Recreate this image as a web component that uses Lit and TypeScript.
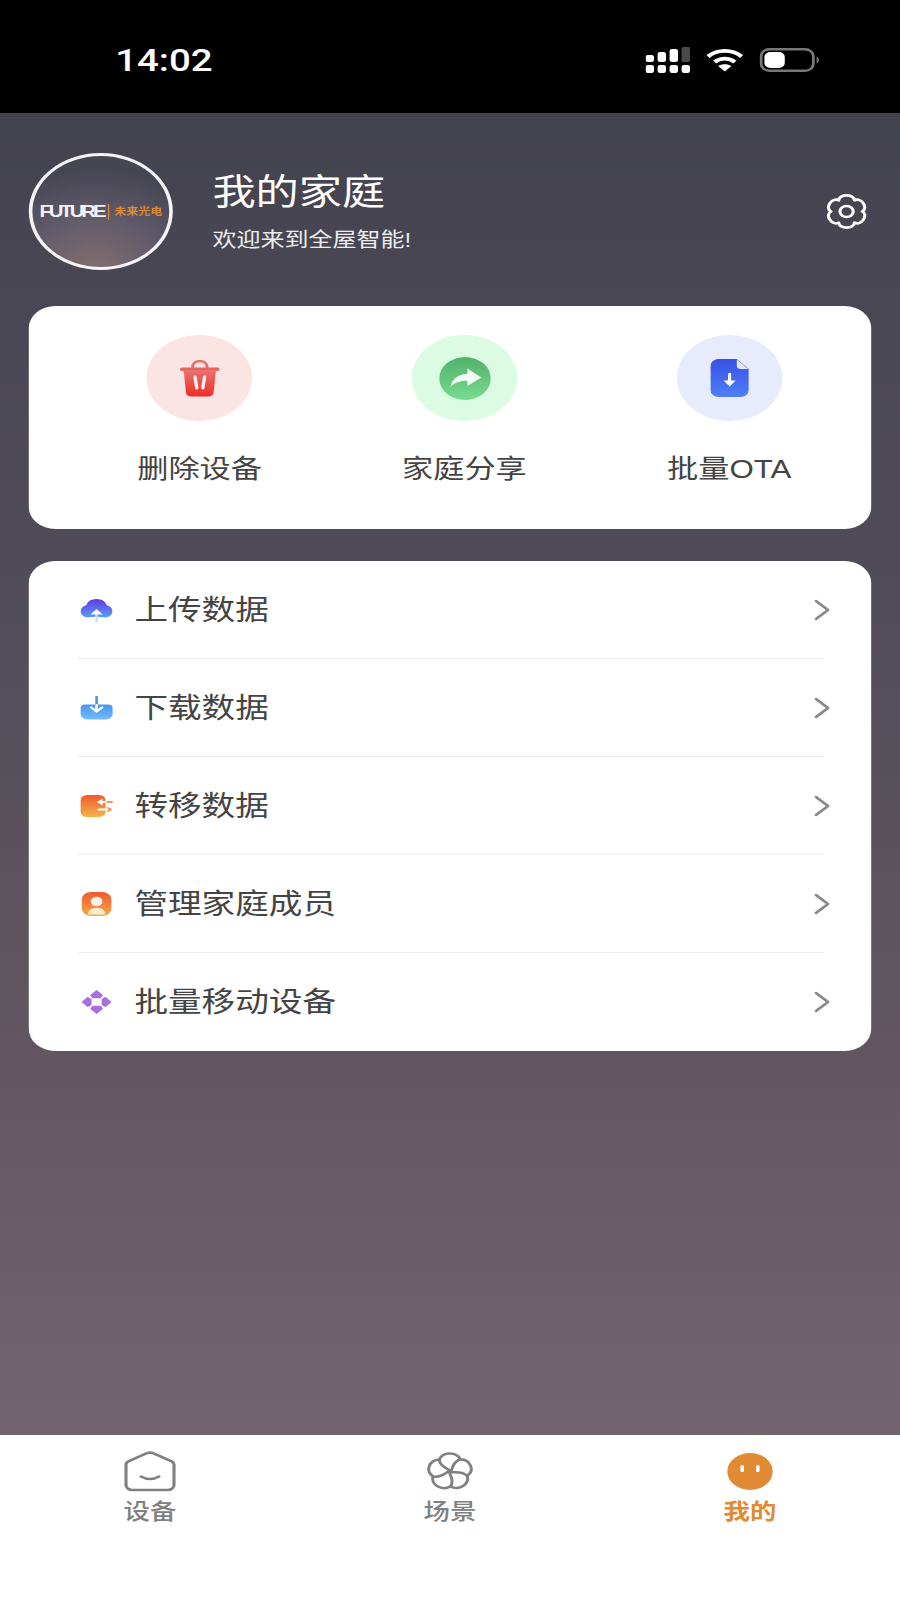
import { LitElement, html, css, svg } from 'lit';
import { customElement } from 'lit/decorators.js';

// gear outline with six round lobes, centred on 20,20
const gearPath = (() => {
  const at = (r: number, deg: number) => {
    const t = (deg - 90) * Math.PI / 180;
    return `${(20 + r * Math.cos(t)).toFixed(2)} ${(20 + r * Math.sin(t)).toFixed(2)}`;
  };
  let d = 'M' + at(14, -30);
  for (let i = 0; i < 6; i++) {
    const a = i * 60;
    d += ` C${at(20.5, a - 20)} ${at(20.5, a + 20)} ${at(14, a + 30)}`;
  }
  return d + ' Z';
})();

// one stroke per petal, turned round the centre for the pinwheel
const petals = [0, 72, 144, 216, 288].map((deg) => svg`
  <path transform="translate(23 23.500) rotate(${deg})" d="M0 -1C-3 -3 -9 -6 -9 -12A9.500 9.500 0 0 1 8.630 -12.270"></path>
`);

const icons = {
  trash: html`<svg width="33" height="37" viewBox="0 0 33 37">
    <defs><linearGradient id="tr" x1="0" y1="0" x2="0" y2="1"><stop offset="0" stop-color="#e9736e"/><stop offset="1" stop-color="#ee2c27"/></linearGradient></defs>
    <path d="M10.500 8V6.500a6 5.500 0 0 1 12 0V8" fill="none" stroke="#e8706b" stroke-width="2.400"/>
    <rect x="0" y="7.500" width="33" height="3.400" rx="1.700" fill="#e8645f"/>
    <path d="M3 10h27l-2 22.500a4.500 4.500 0 0 1-4.500 4h-14a4.500 4.500 0 0 1-4.500-4z" fill="url(#tr)"/>
    <path d="M12.500 17l1.500 11M20.500 17l-1.500 11" stroke="#fff" stroke-width="2.800" stroke-linecap="round" opacity=".9"/>
  </svg>`,
  share: html`<svg width="43" height="43" viewBox="0 0 43 43">
    <defs><linearGradient id="sh" x1="0" y1="0" x2="0" y2="1"><stop offset="0" stop-color="#52b16b"/><stop offset="1" stop-color="#78dc90"/></linearGradient></defs>
    <circle cx="21.500" cy="21.500" r="21.500" fill="url(#sh)"/>
    <path d="M23.500 11.500L35 20.500 23.500 29v-5.200c-6 0-10.500 1.600-14 6.200 1-7.500 6-12.600 14-13.200z" fill="#f2fbf4"/>
  </svg>`,
  ota: html`<svg width="32" height="38" viewBox="0 0 32 38">
    <defs><linearGradient id="ot" x1="0" y1="0" x2="0" y2="1"><stop offset="0" stop-color="#3850e6"/><stop offset="1" stop-color="#4f80f6"/></linearGradient></defs>
    <path d="M7 0h15l10 10v21a7 7 0 0 1-7 7H7a7 7 0 0 1-7-7V7a7 7 0 0 1 7-7z" fill="url(#ot)"/>
    <path d="M22 0.500l9.500 9.500h-6a3.500 3.500 0 0 1-3.500-3.500z" fill="#e6ebfb"/>
    <path d="M16 15v9" stroke="#fff" stroke-width="2.600" stroke-linecap="round"/>
    <path d="M11 21.500h10L16 27.500z" fill="#fff"/>
  </svg>`,
  cloud: html`<svg width="27" height="24" viewBox="0 0 27 24">
    <defs><linearGradient id="cl" x1="0" y1="0" x2="0" y2="1"><stop offset="0" stop-color="#6438e0"/><stop offset="1" stop-color="#5a9ef8"/></linearGradient></defs>
    <path d="M6 19.500A6.200 6.200 0 0 1 4.800 7.300 9 9 0 0 1 22 7.300 6.200 6.200 0 0 1 21 19.500Q13.500 18 6 19.500z" fill="url(#cl)"/>
    <path d="M13.500 24V14" stroke="#c9dcfb" stroke-width="2" stroke-linecap="round"/>
    <path d="M8.500 16.500l5-5.500 5 5.500z" fill="#fff"/>
  </svg>`,
  download: html`<svg width="27" height="24" viewBox="0 0 27 24">
    <defs><linearGradient id="dl" x1="0" y1="0" x2="0" y2="1"><stop offset="0" stop-color="#4895ee"/><stop offset="1" stop-color="#72bcfc"/></linearGradient></defs>
    <path d="M0 12.500Q0 8.500 4 8.500H23Q27 8.500 27 12.500V17.500A6 6 0 0 1 21 23.500H6A6 6 0 0 1 0 17.500z" fill="url(#dl)"/>
    <path d="M13.500 1V9" stroke="#4d92dc" stroke-width="2.200" stroke-linecap="round"/>
    <path d="M13.500 9V15M9 11.500l4.500 4 4.500-4" fill="none" stroke="#fff" stroke-width="2.200" stroke-linecap="round" stroke-linejoin="round"/>
  </svg>`,
  transfer: html`<svg width="27" height="22" viewBox="0 0 27 22">
    <defs><linearGradient id="tf" x1="0" y1="0" x2="0" y2="1"><stop offset="0" stop-color="#ee5a2c"/><stop offset="1" stop-color="#f6b24c"/></linearGradient></defs>
    <path d="M6 0h9q6 0 6 6v10q0 6-6 6H6q-6 0-6-6V6q0-6 6-6z" fill="url(#tf)"/>
    <path d="M21 7h5.500M21 14.500h4" stroke="#e89a5c" stroke-width="1.800" stroke-linecap="round"/>
    <path d="M22.500 11.500l4 3-4 3z" fill="#e8924f"/>
    <path d="M15 7h6M15 14.500h7.500" stroke="#fff" stroke-width="1.800" stroke-linecap="round"/>
    <path d="M18.500 3.500L14 7l4.500 3.500z" fill="#fff"/>
  </svg>`,
  member: html`<svg width="25" height="24" viewBox="0 0 25 24">
    <defs><linearGradient id="mb" x1="0" y1="0" x2="0" y2="1"><stop offset="0" stop-color="#ee5a2e"/><stop offset="1" stop-color="#f5a948"/></linearGradient></defs>
    <rect width="25" height="24" rx="8" fill="url(#mb)"/>
    <circle cx="12.500" cy="9.500" r="4.800" fill="#fbf1ea"/>
    <path d="M5.500 21.500c0-3.700 3.100-5.500 7-5.500s7 1.800 7 5.500q0 1-1 1h-12q-1 0-1-1z" fill="#fdeccf"/>
  </svg>`,
  move: html`<svg width="25" height="24" viewBox="0 0 25 24" fill="#a86fe2" stroke="#a86fe2" stroke-width="1.500" stroke-linejoin="round">
    <path d="M12.500 1L17 5.200 15.500 7.500H9.500L8 5.200z"/>
    <path d="M12.500 23L17 18.800 15.500 16.500H9.500L8 18.800z"/>
    <path d="M1 12L5.200 7.800 7.500 9.300V14.700L5.200 16.200z"/>
    <path d="M24 12L19.800 7.800 17.500 9.300V14.700L19.800 16.200z"/>
  </svg>`,
};

const actions = [
  { label: '删除设备', tone: 'red', icon: icons.trash },
  { label: '家庭分享', tone: 'green', icon: icons.share },
  { label: '批量OTA', tone: 'blue', icon: icons.ota },
];

const rows = [
  { label: '上传数据', icon: icons.cloud },
  { label: '下载数据', icon: icons.download },
  { label: '转移数据', icon: icons.transfer },
  { label: '管理家庭成员', icon: icons.member },
  { label: '批量移动设备', icon: icons.move },
];

@customElement('app-root')
export class AppRoot extends LitElement {
  static styles = css`
    :host {
      display: block;
      width: 900px;
      height: 1600px;
      overflow: hidden;
      font-family: "Liberation Sans", "Noto Sans CJK SC", sans-serif;
    }

    /* the whole screen is a 750 wide layout stretched to 900 */
    .stage {
      width: 750px;
      height: 1600px;
      display: flex;
      flex-direction: column;
      transform: scaleX(1.2);
      transform-origin: 0 0;
    }

    .status {
      height: 113px;
      flex: none;
      background: #000;
      display: flex;
      align-items: center;
      padding: 6px 66px 0 96px;
      box-sizing: border-box;
      color: #fff;
    }

    .time {
      font-family: Roboto, sans-serif;
      font-weight: 500;
      font-size: 32px;
      line-height: 38px;
    }

    .status-icons {
      margin-left: auto;
      display: flex;
      align-items: center;
      gap: 13px;
    }

    .status-icons svg {
      display: block;
    }

    .main {
      flex: 1;
      background: linear-gradient(180deg, #43434f 0%, #544f5a 45%, #645862 75%, #736570 100%);
      padding: 40px 24px 0;
      box-sizing: border-box;
    }

    .header {
      display: flex;
      align-items: flex-start;
      height: 117px;
    }

    .avatar {
      width: 120px;
      height: 117px;
      flex: none;
      box-sizing: border-box;
      border: 3px solid #f4f4f6;
      border-radius: 50%;
      background: radial-gradient(circle at 45% 108%, #86716f 0%, #5f5a69 45%, #464552 80%);
      display: flex;
      align-items: center;
      justify-content: center;
      gap: 4px;
      white-space: nowrap;
    }

    .brand {
      font-weight: 700;
      font-size: 17px;
      letter-spacing: -2.600px;
      color: #f2f2f2;
      line-height: 18px;
    }

    .brand-sep {
      width: 1px;
      height: 16px;
      background: #d98a35;
    }

    .brand-cn {
      font-weight: 700;
      font-size: 10px;
      color: #d98a35;
      line-height: 16px;
    }

    .family {
      margin-left: 33px;
      padding-top: 18px;
      color: #fff;
    }

    .family h1 {
      margin: 0;
      font-size: 36px;
      font-weight: 400;
      line-height: 44px;
    }

    .family p {
      margin: 11px 0 0;
      font-size: 20px;
      line-height: 28px;
      color: #ececec;
    }

    .gear {
      margin: 40px 2px 0 auto;
      display: block;
    }

    .card {
      background: #fff;
      border-radius: 22px;
    }

    .actions {
      margin-top: 36px;
      height: 223px;
      display: flex;
      padding: 29px 8px 0 32px;
      box-sizing: border-box;
    }

    .action {
      flex: 1;
      display: flex;
      flex-direction: column;
      align-items: center;
    }

    .bubble {
      width: 88px;
      height: 86px;
      border-radius: 50%;
      display: flex;
      align-items: center;
      justify-content: center;
    }

    .bubble.red { background: #fbe4e4; }
    .bubble.green { background: #dbfbe3; }
    .bubble.blue { background: #e8ebfc; }

    .action span {
      margin-top: 30px;
      font-size: 26px;
      line-height: 36px;
      color: #444;
    }

    .list {
      margin-top: 32px;
      padding: 0 39px 0 41px;
    }

    .row {
      height: 98px;
      display: flex;
      align-items: center;
      border-bottom: 1px solid #ececec;
      box-sizing: border-box;
    }

    .row:last-child {
      border-bottom: none;
    }

    .row-icon {
      width: 27px;
      flex: none;
      margin-left: 2px;
      display: flex;
      justify-content: center;
    }

    .row span {
      margin-left: 18px;
      font-size: 28px;
      line-height: 42px;
      color: #444;
      position: relative;
      top: 1px;
    }

    .chevron {
      margin-left: auto;
      margin-right: -5px;
      display: block;
    }

    .tabs {
      height: 165px;
      flex: none;
      background: #fff;
      display: flex;
      padding-top: 13px;
      box-sizing: border-box;
    }

    .tab {
      flex: 1;
      display: flex;
      flex-direction: column;
      align-items: center;
      font-size: 22px;
      font-weight: 500;
      line-height: 26px;
      color: #808080;
    }

    .tab.on {
      color: #e08a33;
      font-weight: 700;
    }

    .tab-icon {
      height: 46px;
      display: flex;
      align-items: center;
    }

    .tab span {
      margin-top: 5px;
    }
  `;

  render() {
    return html`
      <div class="stage">
        <div class="status">
          <div class="time">14:02</div>
          <div class="status-icons">
            <svg width="37" height="26" viewBox="0 0 37 26" fill="#fff">
              <rect x="0" y="8" width="7" height="7" rx="2"/>
              <rect x="10" y="5" width="7" height="10" rx="2"/>
              <rect x="20" y="2" width="7" height="13" rx="2"/>
              <rect x="30" y="0" width="7" height="15" rx="1.500" fill="#4a4a4a"/>
              <rect x="0" y="18" width="7" height="8" rx="2"/>
              <rect x="10" y="18" width="7" height="8" rx="2"/>
              <rect x="20" y="18" width="7" height="8" rx="2"/>
              <rect x="30" y="18" width="7" height="8" rx="2"/>
            </svg>
            <svg width="32" height="24" viewBox="0 0 32 24" fill="none" stroke="#fff" stroke-width="3.800">
              <path d="M2 8.500C10 1 22 1 30 8.500"/>
              <path d="M7.500 14c5-4.500 12-4.500 17 0"/>
              <path d="M16 23.500l-5.500-5.500c3-2.500 8-2.500 11 0z" fill="#fff" stroke="none"/>
            </svg>
            <svg width="51" height="24" viewBox="0 0 51 24">
              <rect x="1.200" y="1.200" width="43.600" height="21.600" rx="7" fill="none" stroke="#777" stroke-width="2.400"/>
              <rect x="4" y="4" width="17" height="16" rx="5" fill="#fff"/>
              <path d="M47.500 8.500a4 4 0 0 1 0 7z" fill="#777"/>
            </svg>
          </div>
        </div>

        <div class="main">
          <div class="header">
            <div class="avatar">
              <span class="brand">FUTURE</span>
              <span class="brand-sep"></span>
              <span class="brand-cn">未来光电</span>
            </div>
            <div class="family">
              <h1>我的家庭</h1>
              <p>欢迎来到全屋智能!</p>
            </div>
            <svg class="gear" width="37" height="37" viewBox="0 0 40 40" fill="none" stroke="#fff" stroke-width="2.800" stroke-linejoin="round">
              <path d=${gearPath}></path>
              <circle cx="20" cy="20" r="6"></circle>
            </svg>
          </div>

          <div class="card actions">
            ${actions.map((a) => html`
              <div class="action">
                <div class="bubble ${a.tone}">${a.icon}</div>
                <span>${a.label}</span>
              </div>
            `)}
          </div>

          <div class="card list">
            ${rows.map((r) => html`
              <div class="row">
                <div class="row-icon">${r.icon}</div>
                <span>${r.label}</span>
                <svg class="chevron" width="14" height="24" viewBox="0 0 14 24" fill="none" stroke="#8a8a8a" stroke-width="2.400" stroke-linecap="round" stroke-linejoin="round">
                  <path d="M2 3l10 9L2 21"></path>
                </svg>
              </div>
            `)}
          </div>
        </div>

        <div class="tabs">
          <div class="tab">
            <div class="tab-icon">
              <svg width="44" height="41" viewBox="0 0 44 41" fill="none" stroke="#808080" stroke-width="2.600" stroke-linejoin="round" stroke-linecap="round">
                <path d="M2 13.500Q2 11.500 4 10.300L19.500 2.200Q22 1 24.500 2.200L40 10.300Q42 11.500 42 13.500V34a5 5 0 0 1-5 5H7a5 5 0 0 1-5-5z"></path>
                <path d="M14.500 25.500q7.500 5 15 0"></path>
              </svg>
            </div>
            <span>设备</span>
          </div>
          <div class="tab">
            <div class="tab-icon">
              <svg width="46" height="46" viewBox="0 0 46 46" fill="none" stroke="#808080" stroke-width="2.500" stroke-linecap="round">${petals}</svg>
            </div>
            <span>场景</span>
          </div>
          <div class="tab on">
            <div class="tab-icon">
              <svg width="38" height="37" viewBox="0 0 38 37">
                <ellipse cx="19" cy="18.500" rx="19" ry="18.500" fill="#e08a33"></ellipse>
                <rect x="11" y="12" width="3" height="7" rx="1.500" fill="#fff"></rect>
                <rect x="24" y="12" width="3" height="7" rx="1.500" fill="#fff"></rect>
              </svg>
            </div>
            <span>我的</span>
          </div>
        </div>
      </div>
    `;
  }
}
